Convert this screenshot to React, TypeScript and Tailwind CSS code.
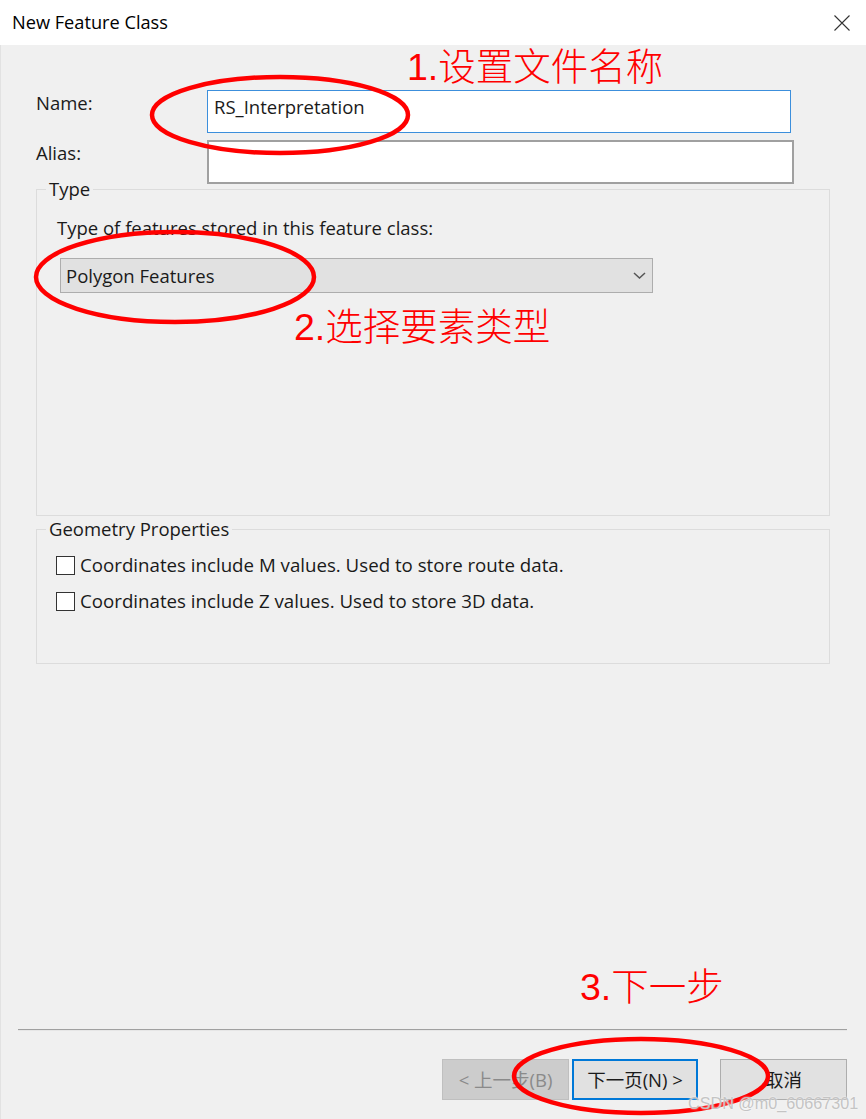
import React from "react";

const ui = "font-['Open_Sans','Noto_Sans_CJK_SC',sans-serif]";
const mark = "font-['Liberation_Sans','Noto_Sans_CJK_SC',sans-serif]";

function Checkbox({ label }: { label: string }) {
  return (
    <label className="flex items-center h-[22px]">
      <span className="w-[19px] h-[19px] border border-[#333333] bg-white mr-[5px] shrink-0" />
      <span className="text-[18.7px] leading-[22px] text-[#1a1a1a] whitespace-nowrap">{label}</span>
    </label>
  );
}

export default function App() {
  return (
    <div className={`relative w-[866px] h-[1119px] flex flex-col bg-[#f0f0f0] overflow-hidden ${ui}`}>
      {/* title bar */}
      <div className="h-[45px] bg-white flex items-center justify-between pl-[12px] pr-[16px] shrink-0">
        <span className="text-[18.2px] text-black">New Feature Class</span>
        <svg width="16" height="16" viewBox="0 0 16 16">
          <path d="M0.5 0.5 L15.5 15.5 M15.5 0.5 L0.5 15.5" stroke="#333" strokeWidth="1.1" />
        </svg>
      </div>

      <div className="flex-1 flex flex-col border-l border-[#e2e2e2]">
        <div className="flex flex-col pl-[35px] pt-[45px]">
          {/* name */}
          <div className="flex items-start">
            <span className="w-[171px] mt-[2px] text-[18.5px] leading-[22px] text-[#1a1a1a]">Name:</span>
            <div className="w-[584px] h-[43px] bg-white border border-[#3c8fdc] pl-[6px] pt-[5px] text-[18.5px] leading-[22px] text-[#1a1a1a]">
              RS_Interpretation
            </div>
          </div>
          {/* alias */}
          <div className="flex items-start mt-[7px]">
            <span className="w-[171px] mt-[2px] text-[18.5px] leading-[22px] text-[#1a1a1a]">Alias:</span>
            <div className="w-[587px] h-[44px] bg-white border-2 border-[#a0a0a0]" />
          </div>

          {/* type */}
          <fieldset className="w-[794px] h-[338px] border border-[#dcdcdc] mt-[-6px]">
            <legend className="ml-[9px] px-[3px] text-[18.5px] leading-[22px] text-[#1a1a1a]">Type</legend>
            <div className="pl-[20px] pt-[17px]">
              <div className="text-[18.5px] leading-[22px] text-[#1a1a1a]">Type of features stored in this feature class:</div>
              <div className="ml-[3px] mt-[19px] w-[593px] h-[35px] bg-[#e1e1e1] border border-[#adadad] flex items-center justify-between pl-[5px] pr-[6px]">
                <span className="text-[18.5px] leading-[22px] text-[#1a1a1a]">Polygon Features</span>
                <svg width="13" height="7" viewBox="0 0 13 7">
                  <path d="M1 1 L6.5 6 L12 1" fill="none" stroke="#555" strokeWidth="1.5" />
                </svg>
              </div>
            </div>
          </fieldset>

          {/* geometry */}
          <fieldset className="w-[794px] h-[146px] border border-[#dcdcdc] mt-[2px]">
            <legend className="ml-[9px] px-[3px] text-[18.5px] leading-[22px] text-[#1a1a1a]">Geometry Properties</legend>
            <div className="pl-[19px] pt-[14px] flex flex-col gap-[14px]">
              <Checkbox label="Coordinates include M values. Used to store route data." />
              <Checkbox label="Coordinates include Z values. Used to store 3D data." />
            </div>
          </fieldset>
        </div>

        {/* footer */}
        <div className="mt-auto">
          <div className="mr-[19px] ml-[17px] h-[2px] border-t border-[#a0a0a0] border-b border-b-[#e6e6e6]" />
          <div className="flex justify-end items-center pr-[19px] pt-[28px] pb-[19px] text-[18.5px] whitespace-nowrap">
            <button className="w-[127px] h-[41px] bg-[#cccccc] border border-[#bfbfbf] text-[#8a8a8a]">
              &lt; 上一步(B)
            </button>
            <button className="ml-[3px] w-[126px] h-[41px] bg-[#e1e1e1] border-2 border-[#0078d7] text-[#1a1a1a]">
              下一页(N) &gt;
            </button>
            <button className="ml-[22px] w-[127px] h-[41px] bg-[#e1e1e1] border border-[#adadad] text-[#1a1a1a]">
              取消
            </button>
          </div>
        </div>
      </div>

      {/* red annotations laid over the dialog */}
      <svg className="absolute left-0 top-0 pointer-events-none" width="866" height="1119">
        <ellipse cx="280" cy="115" rx="128" ry="38" fill="none" stroke="#ff0000" strokeWidth="4.5" />
        <ellipse cx="175" cy="277" rx="139" ry="45" fill="none" stroke="#ff0000" strokeWidth="4.5" />
        <ellipse cx="641" cy="1076" rx="127" ry="37" fill="none" stroke="#ff0000" strokeWidth="4.5" />
      </svg>
      <div className={`absolute left-[407px] top-[44px] text-[37.5px] leading-[46px] font-light text-[#ff0000] whitespace-nowrap ${mark}`}>1.设置文件名称</div>
      <div className={`absolute left-[294px] top-[304px] text-[37.5px] leading-[46px] font-light text-[#ff0000] whitespace-nowrap ${mark}`}>2.选择要素类型</div>
      <div className={`absolute left-[580px] top-[964px] text-[37.5px] leading-[46px] font-light text-[#ff0000] whitespace-nowrap ${mark}`}>3.下一步</div>
      <div className={`absolute left-[688px] top-[1093px] text-[16.2px] leading-[20px] text-[#c4c4c4] whitespace-nowrap [text-shadow:0_0_2px_#ffffff] ${mark}`}>
        CSDN @m0_60667301
      </div>
    </div>
  );
}
